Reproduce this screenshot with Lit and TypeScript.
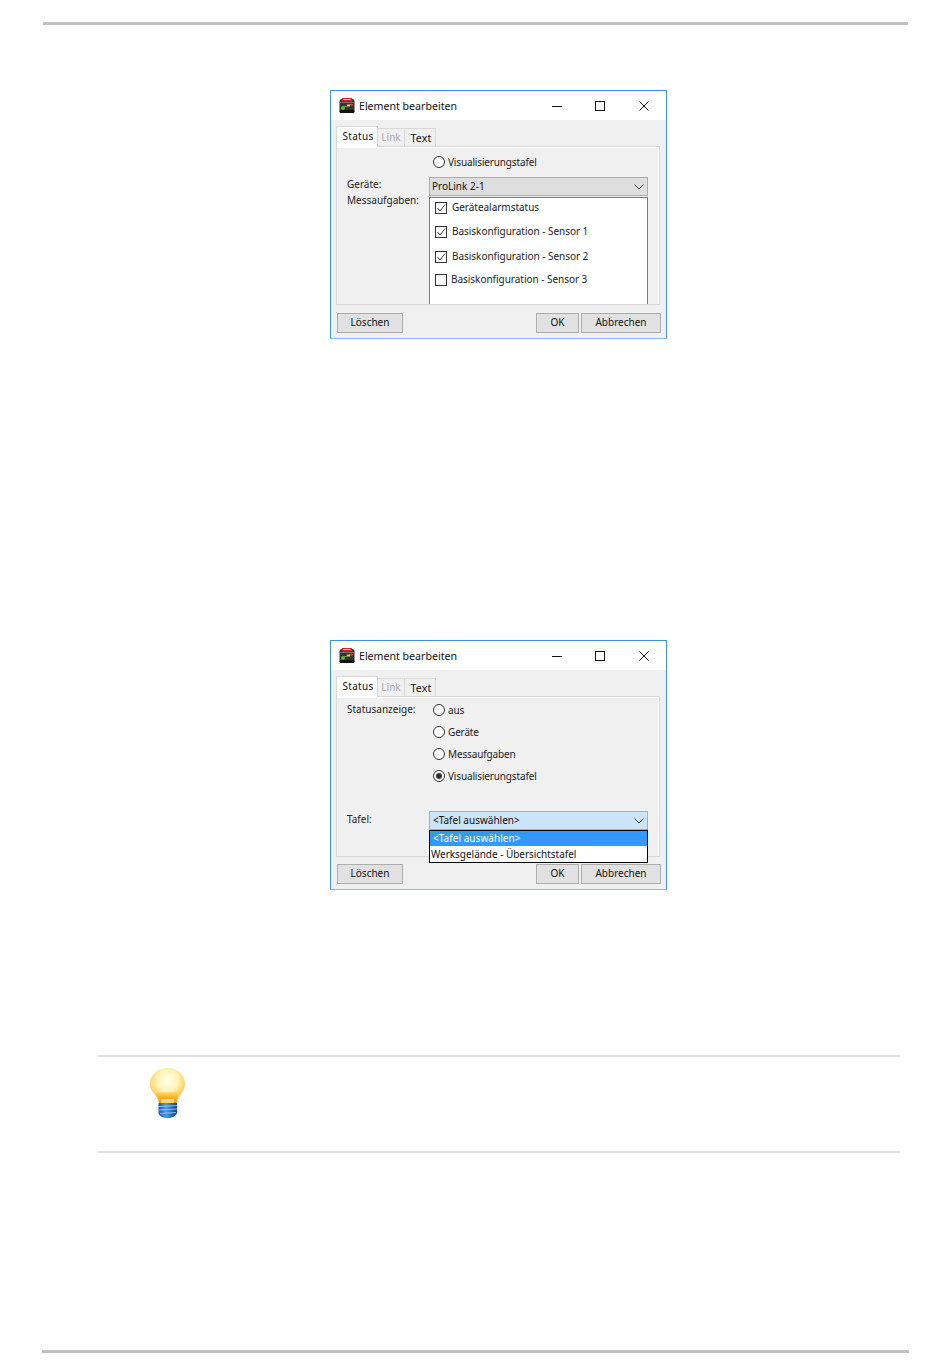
import { LitElement, html, css, svg } from "lit";
import { customElement, property } from "lit/decorators.js";

const appIcon = html`<svg class="app-icon" viewBox="0 0 16 15" aria-hidden="true">
  <rect x="0.5" y="1" width="15" height="14" rx="2.5" fill="#333"/>
  <rect x="3" y="0" width="10" height="3.5" fill="#d7242c"/>
  <rect x="4.500" y="1" width="7" height="1" fill="#f6d6d6"/>
  <rect x="0.5" y="4" width="15" height="1" fill="#777"/>
  <rect x="0.5" y="12" width="15" height="3" rx="1.5" fill="#111"/>
  <path d="M2 10 L8 8 L13 6" stroke="#8a8a5a" stroke-width="1" fill="none"/>
  <circle cx="4" cy="10" r="2" fill="#62b62e"/>
  <rect x="8" y="6.500" width="3" height="2" fill="#f0d030"/>
  <rect x="11.500" y="6" width="2.500" height="1.500" fill="#e0452c"/>
</svg>`;

const chevron = html`<svg class="chev" viewBox="0 0 10 6" aria-hidden="true"><path d="M0.5 0.5 L5 5 L9.5 0.5" fill="none" stroke="#444" stroke-width="1"/></svg>`;

const bulb = svg`<svg class="bulb" viewBox="0 0 38 50" aria-hidden="true">
  <defs>
    <radialGradient id="glass" cx="0.5" cy="0.36" r="0.62">
      <stop offset="0" stop-color="#fffef0"/>
      <stop offset="0.5" stop-color="#fff4b0"/>
      <stop offset="0.82" stop-color="#fdcf68"/>
      <stop offset="1" stop-color="#eeac6c"/>
    </radialGradient>
    <linearGradient id="neck" x1="0" y1="0" x2="0" y2="1">
      <stop offset="0" stop-color="#fdd25e" stop-opacity="0"/>
      <stop offset="0.45" stop-color="#fbbb30"/>
      <stop offset="1" stop-color="#ee9408"/>
    </linearGradient>
    <linearGradient id="base" x1="0" y1="0" x2="1" y2="0">
      <stop offset="0" stop-color="#1c53a8"/>
      <stop offset="0.4" stop-color="#4c9be6"/>
      <stop offset="1" stop-color="#143f8c"/>
    </linearGradient>
  </defs>
  <path d="M18.5 0 C28.5 0 36 7 36 16 C36 24 29 27 27.5 35 L10 35 C8.500 27 1 24 1 16 C1 7 8.500 0 18.500 0 Z" fill="url(#glass)"/>
  <path d="M5 22 C8 25 10 23 14 24 L23 24 C27 23 29 25 32 22 C30 27 27.500 30 27.500 35 L10 35 C10 30 7 27 5 22 Z" fill="url(#neck)"/>
  <rect x="12" y="31" width="13" height="4" fill="#fbe9a0" opacity="0.75"/>
  <path d="M9.500 35 L28 35 L28 45 C27 48 23 50 18.500 50 C14 50 10 48 9.500 45 Z" fill="url(#base)"/>
  <path d="M10 38.500 L28 37.500 M10 42 L28 41 M11 45.500 L27 44.500" stroke="#a8d0f4" stroke-width="1" opacity="0.8"/>
</svg>`;

@customElement("app-root")
export class AppRoot extends LitElement {
  @property({ type: Array }) sensors = [
    { label: "Gerätealarmstatus", checked: true },
    { label: "Basiskonfiguration - Sensor 1", checked: true },
    { label: "Basiskonfiguration - Sensor 2", checked: true },
    { label: "Basiskonfiguration - Sensor 3", checked: false },
  ];

  static styles = css`
    :host { display: block; min-height: 1370px; background: #fff; font-family: "Noto Sans", "Liberation Sans", sans-serif; font-size: 10px; color: #222; }
    .page { display: flex; flex-direction: column; align-items: flex-start; }
    .rule { background: #c0c0c0; height: 3px; }
    .rule.top { margin: 22px 0 0 43px; width: 865px; }
    .rule.bottom { margin: 197px 0 0 42px; width: 867px; }

    .dialog { width: 337px; margin-left: 330px; border: 1px solid #3f93d6; border-bottom-color: #86bce8; box-sizing: border-box; background: #f0f0f0; position: relative; }
    .first { margin-top: 65px; height: 249px; }
    .second { margin-top: 301px; height: 250px; }

    .titlebar { height: 29px; background: #fff; display: flex; align-items: center; padding-left: 8px; }
    .app-icon { width: 16px; height: 15px; margin-right: 4px; flex: none; }
    .title { font-size: 10.6px; color: #111; flex: 1; }
    .wc { width: 44px; height: 29px; display: flex; align-items: center; justify-content: center; flex: none; box-sizing: border-box; }
    .wc svg { width: 10px; height: 10px; }
    .wc.min { padding-left: 2px; }

    .body { padding: 6px 5px 0; }
    .tabs { display: flex; height: 20px; align-items: flex-end; }
    .tab { box-sizing: border-box; height: 18px; border: 1px solid #d9d9d9; border-bottom: none; border-left: none; display: flex; align-items: center; justify-content: center; background: #f0f0f0; padding-bottom: 1px; }
    .tab.status { width: 42px; height: 21px; border-left: 1px solid #d9d9d9; background: #fff; margin-bottom: -1px; position: relative; z-index: 1; color: #111; letter-spacing: 0.3px; padding: 0 0 3px 2px; }
    .tab.link { width: 27px; color: #a8a8a8; }
    .tab.text { width: 31px; color: #111; font-size: 10.6px; letter-spacing: 0.2px; padding: 1px 0 0 2px; }

    .panel { box-sizing: border-box; width: 324px; border: 1px solid #d9d9d9; box-shadow: inset 0 1px #fff, inset -1px 0 #fff; background: #f0f0f0; overflow: hidden; }
    .first .panel { height: 159px; padding: 4px 0 0 10px; }
    .second .panel { height: 161px; padding: 2px 0 0 10px; }

    .line { display: grid; grid-template-columns: 82px 219px; align-items: center; }
    .line-label { padding-bottom: 2px; line-height: 13px; }
    .radio-line { height: 22px; }
    .radio { display: flex; align-items: center; padding-left: 4px; gap: 3px; letter-spacing: -0.15px; }
    .radio i { width: 12px; height: 12px; border: 1px solid #333; border-radius: 50%; background: #fff; box-sizing: border-box; display: flex; align-items: center; justify-content: center; flex: none; }
    .radio i.on::after { content: ""; width: 6px; height: 6px; border-radius: 50%; background: #333; }

    .combo { box-sizing: border-box; height: 19px; background: #dedede; border: 1px solid #adadad; display: flex; align-items: center; justify-content: space-between; padding: 0 3px 0 2px; color: #111; }
    .combo > span { padding-bottom: 2px; }
    .combo.open { background: #cce4f7; border-color: #8fb4d6; padding-left: 3px; }
    .chev { width: 10px; height: 6px; flex: none; }
    .device { margin-top: 4px; }
    .device .line-label { padding-bottom: 5px; }

    .list-line { align-items: start; margin-top: 1px; }
    .list-label { line-height: 13px; margin-top: -3px; }
    .list { box-sizing: border-box; height: 110px; background: #fff; border: 1px solid #7a7a7a; border-bottom: none; padding: 3px 0 0 5px; }
    .item { display: flex; align-items: center; gap: 5px; height: 14px; margin-top: 10px; }
    .item > span:last-child { padding-bottom: 2px; letter-spacing: -0.03px; }
    .item:first-child { margin-top: 0; }
    .item:nth-child(3) { margin-top: 11px; }
    .item:nth-child(4) { margin-top: 9px; gap: 4px; }
    .box { width: 12px; height: 12px; box-sizing: border-box; border: 1px solid #333; background: #fff; flex: none; display: flex; }
    .box svg { width: 10px; height: 10px; }

    .board { margin-top: 24px; }
    .board .line-label { padding-bottom: 3px; }
    .dropdown { position: absolute; left: 98px; top: 189px; box-sizing: border-box; width: 219px; height: 33px; border: 1px solid #000; background: #fff; z-index: 2; color: #111; }
    .opt { height: 15px; display: flex; align-items: center; padding: 0 0 2px 1px; box-sizing: border-box; margin-bottom: 1px; letter-spacing: -0.03px; }
    .opt.sel { background: #3399ff; color: #fff; padding-left: 3px; letter-spacing: 0.05px; }

    .buttons { display: flex; margin: 0 0 0 1px; width: 324px; }
    .first .buttons { margin-top: 8px; }
    .second .buttons { margin-top: 7px; }
    .btn { box-sizing: border-box; height: 20px; background: #e1e1e1; border: 1px solid #adadad; display: flex; align-items: center; justify-content: center; color: #111; padding-bottom: 2px; }
    .btn.del { width: 66px; margin-right: auto; }
    .btn.ok { width: 43px; margin-right: 2px; }
    .btn.cancel { width: 80px; }

    .note { box-sizing: border-box; margin: 165px 0 0 97px; width: 803px; height: 98px; border-top: 2px solid #e2e2e2; border-bottom: 2px solid #e2e2e2; padding: 11px 0 0 52px; }
    .bulb { display: block; width: 38px; height: 50px; filter: blur(0.3px); }
  `;

  private winControls() {
    return html`
      <div class="wc min"><svg viewBox="0 0 10 10"><path d="M0 5.500 H10" stroke="#111"/></svg></div>
      <div class="wc"><svg viewBox="0 0 10 10"><rect x="0.500" y="0.500" width="9" height="9" fill="none" stroke="#111"/></svg></div>
      <div class="wc"><svg viewBox="0 0 10 10"><path d="M0.500 0.500 L9.500 9.500 M9.500 0.500 L0.500 9.500" stroke="#111"/></svg></div>`;
  }

  private frame(cls: string, content: unknown, overlay: unknown = null) {
    return html`<section class="dialog ${cls}">
      <div class="titlebar">${appIcon}<span class="title">Element bearbeiten</span>${this.winControls()}</div>
      <div class="body">
        <div class="tabs">
          <div class="tab status">Status</div>
          <div class="tab link">Link</div>
          <div class="tab text">Text</div>
        </div>
        <div class="panel">${content}</div>
        <div class="buttons">
          <div class="btn del">Löschen</div>
          <div class="btn ok">OK</div>
          <div class="btn cancel">Abbrechen</div>
        </div>
      </div>
      ${overlay}
    </section>`;
  }

  private radioLine(label: string, text: string, on = false) {
    return html`<div class="line radio-line"><span class="line-label">${label}</span>
      <span class="radio"><i class=${on ? "on" : ""}></i>${text}</span></div>`;
  }

  private firstDialog() {
    const tick = html`<svg viewBox="0 0 10 10"><path d="M1.500 5 L4 8 L9 1.500" fill="none" stroke="#444" stroke-width="1"/></svg>`;
    return this.frame("first", html`
      ${this.radioLine("", "Visualisierungstafel")}
      <div class="line device"><span class="line-label">Geräte:</span><div class="combo"><span>ProLink 2-1</span>${chevron}</div></div>
      <div class="line list-line"><span class="list-label">Messaufgaben:</span>
        <div class="list">
          ${this.sensors.map((s) => html`<div class="item"><span class="box">${s.checked ? tick : null}</span><span>${s.label}</span></div>`)}
        </div>
      </div>`);
  }

  private secondDialog() {
    return this.frame("second", html`
      ${this.radioLine("Statusanzeige:", "aus")}
      ${this.radioLine("", "Geräte")}
      ${this.radioLine("", "Messaufgaben")}
      ${this.radioLine("", "Visualisierungstafel", true)}
      <div class="line board"><span class="line-label">Tafel:</span><div class="combo open"><span>&lt;Tafel auswählen&gt;</span>${chevron}</div></div>`,
      html`<div class="dropdown">
        <div class="opt sel">&lt;Tafel auswählen&gt;</div>
        <div class="opt">Werksgelände - Übersichtstafel</div>
      </div>`);
  }

  render() {
    return html`<div class="page">
      <div class="rule top"></div>
      ${this.firstDialog()}
      ${this.secondDialog()}
      <div class="note">${bulb}</div>
      <div class="rule bottom"></div>
    </div>`;
  }
}
